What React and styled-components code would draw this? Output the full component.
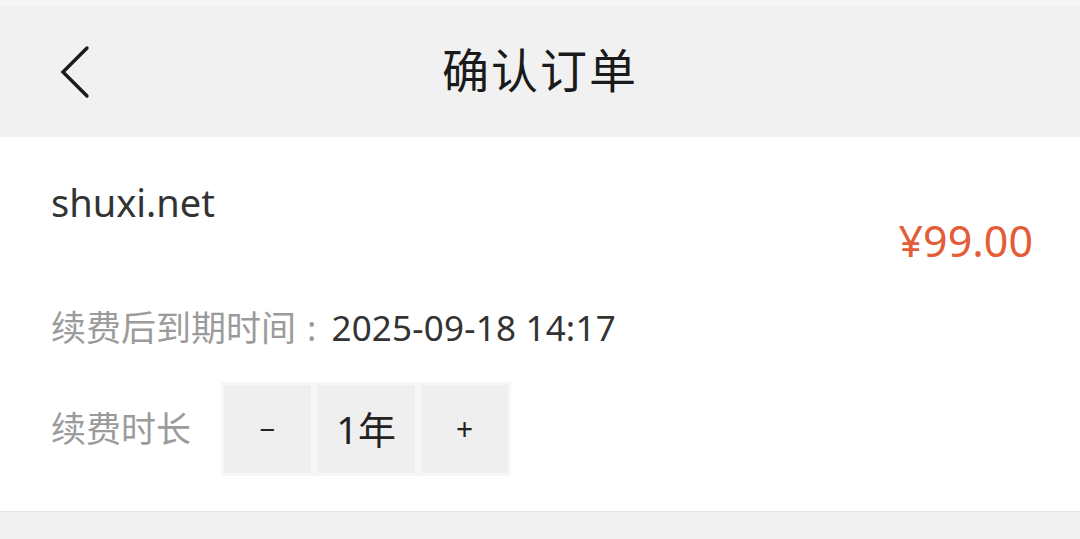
import React, { useState } from 'react';
import styled, { createGlobalStyle } from 'styled-components';

const GlobalStyle = createGlobalStyle`
  html, body {
    margin: 0;
    padding: 0;
    background: #f1f1f1;
    font-family: "Noto Sans", "Noto Sans CJK SC", sans-serif;
  }
`;

const Page = styled.div`
  width: 1080px;
  min-height: 539px;
  background: #f1f1f1;
`;

const StatusStrip = styled.div`
  height: 6px;
  background: #f6f6f8;
`;

const Header = styled.header`
  height: 131px;
  display: grid;
  grid-template-columns: 1fr auto 1fr;
  align-items: center;
  background: #f1f1f1;
`;

const BackButton = styled.button`
  justify-self: start;
  margin-left: 58px;
  padding: 0;
  border: 0;
  background: none;
  display: flex;
  cursor: pointer;
`;

const Title = styled.h1`
  margin: 0;
  font-size: 47px;
  font-weight: 400;
  color: #1a1a1a;
  letter-spacing: 2px;
  line-height: 1;
  padding-bottom: 2px;
`;

const Card = styled.section`
  background: #fff;
  padding: 40px 47px 35px 51px;
  border-bottom: 1px solid #e4e4e4;
`;

const TopRow = styled.div`
  display: flex;
  justify-content: space-between;
  align-items: flex-start;
`;

const DomainName = styled.div`
  font-size: 38px;
  line-height: 50px;
  color: #333;
`;

const Price = styled.div`
  margin-top: 39px;
  font-size: 43px;
  line-height: 50px;
  color: #e35d38;
`;

const InfoRow = styled.div`
  display: flex;
  align-items: center;
  margin-top: ${({ $gap }) => $gap}px;
  font-size: 35px;
  line-height: 50px;
`;

const Label = styled.span`
  color: #9b9b9b;
`;

const Colon = styled.span`
  color: #9b9b9b;
  margin: 0 15px 0 11px;
`;

const Value = styled.span`
  color: #333;
  letter-spacing: 0.2px;
`;

const Stepper = styled.div`
  display: flex;
  gap: 6px;
  padding: 3px;
  margin-left: 30px;
  background: #f7f7f7;
`;

const Cell = styled.div`
  width: ${({ $w }) => $w}px;
  height: 88px;
  display: flex;
  align-items: center;
  justify-content: center;
  background: #efefef;
  color: #222;
  font-family: "Noto Sans", sans-serif;
  font-size: ${({ $size }) => $size}px;
  user-select: none;
  cursor: ${({ $clickable }) => ($clickable ? 'pointer' : 'default')};

  & > span {
    font-family: "Noto Sans", "Noto Sans CJK SC", sans-serif;
  }
`;

const ChevronLeft = () => (
  <svg width="32" height="54" viewBox="0 0 32 54">
    <polyline
      points="29,3 5,27 29,51"
      fill="none"
      stroke="#1a1a1a"
      strokeWidth="3.4"
      strokeLinecap="round"
      strokeLinejoin="miter"
    />
  </svg>
);

export default function App() {
  const [years, setYears] = useState(1);

  return (
    <>
      <GlobalStyle />
      <Page>
        <StatusStrip />
        <Header>
          <BackButton aria-label="返回">
            <ChevronLeft />
          </BackButton>
          <Title>确认订单</Title>
          <div />
        </Header>
        <Card>
          <TopRow>
            <DomainName>shuxi.net</DomainName>
            <Price>¥{(99 * years).toFixed(2)}</Price>
          </TopRow>
          <InfoRow $gap={37}>
            <Label>续费后到期时间</Label>
            <Colon>:</Colon>
            <Value>2025-09-18 14:17</Value>
          </InfoRow>
          <InfoRow $gap={29}>
            <Label>续费时长</Label>
            <Stepper>
              <Cell $w={87} $size={28} $clickable onClick={() => setYears((y) => Math.max(1, y - 1))}>
                −
              </Cell>
              <Cell $w={98} $size={38}>
                <span>{years}年</span>
              </Cell>
              <Cell $w={87} $size={30} $clickable onClick={() => setYears((y) => y + 1)}>
                +
              </Cell>
            </Stepper>
          </InfoRow>
        </Card>
      </Page>
    </>
  );
}
